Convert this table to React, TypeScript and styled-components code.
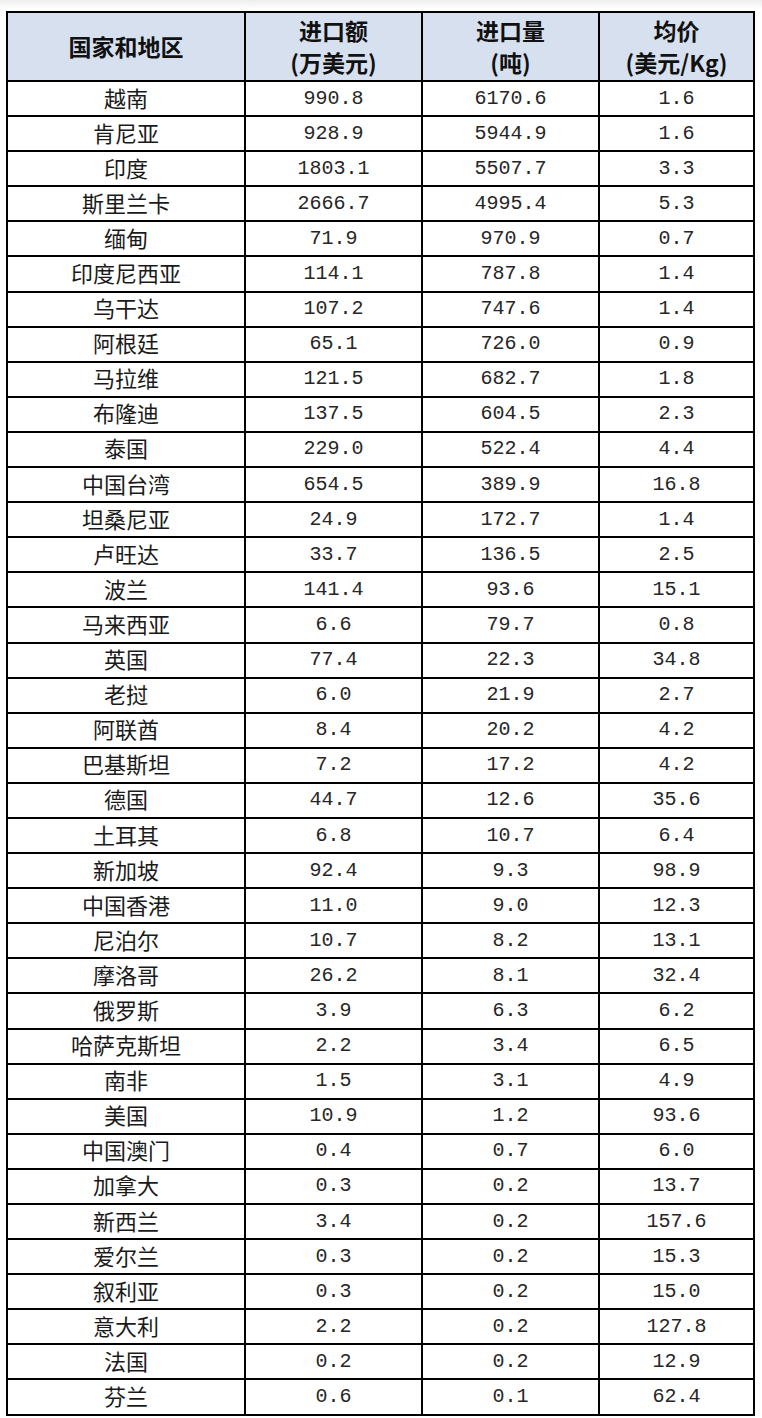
import React from "react";
import styled, { createGlobalStyle } from "styled-components";

const Global = createGlobalStyle`
  html, body { margin: 0; padding: 0; background: #ffffff; }
  body {
    width: 762px;
    background: linear-gradient(#ededed 0px, #f6f6f6 4px, #ffffff 9px) no-repeat;
    font-family: "Noto Sans CJK SC", "Noto Sans", sans-serif;
    color: #111;
  }
`;

const Page = styled.div`
  padding: 11px 0 0 6px;
  width: 756px;
  box-sizing: border-box;
`;

const Table = styled.table`
  border-collapse: collapse;
  table-layout: fixed;
  width: 747px;
`;

const HeadCell = styled.th`
  background: #d7e0ef;
  border: 2px solid #000;
  height: 65px;
  padding: 0 0 2px;
  font-weight: 700;
  font-size: 23px;
  line-height: 32px;
  color: #111;
  text-align: center;
  vertical-align: middle;
`;

const Cell = styled.td<{ $num?: boolean }>`
  border: 2px solid #000;
  height: ${(p) => (p.$num ? "33.1px" : "29.1px")};
  padding: ${(p) => (p.$num ? "0" : "0 0 4px")};
  text-align: center;
  vertical-align: middle;
  color: ${(p) => (p.$num ? "#262626" : "#1a1a1a")};
  font-size: ${(p) => (p.$num ? "20px" : "22px")};
  line-height: 1;
  font-family: ${(p) =>
    p.$num
      ? '"Liberation Mono", "Noto Sans CJK SC", monospace'
      : '"Noto Sans CJK SC", sans-serif'};
`;

const rows: [string, string, string, string][] = [
  ["越南", "990.8", "6170.6", "1.6"],
  ["肯尼亚", "928.9", "5944.9", "1.6"],
  ["印度", "1803.1", "5507.7", "3.3"],
  ["斯里兰卡", "2666.7", "4995.4", "5.3"],
  ["缅甸", "71.9", "970.9", "0.7"],
  ["印度尼西亚", "114.1", "787.8", "1.4"],
  ["乌干达", "107.2", "747.6", "1.4"],
  ["阿根廷", "65.1", "726.0", "0.9"],
  ["马拉维", "121.5", "682.7", "1.8"],
  ["布隆迪", "137.5", "604.5", "2.3"],
  ["泰国", "229.0", "522.4", "4.4"],
  ["中国台湾", "654.5", "389.9", "16.8"],
  ["坦桑尼亚", "24.9", "172.7", "1.4"],
  ["卢旺达", "33.7", "136.5", "2.5"],
  ["波兰", "141.4", "93.6", "15.1"],
  ["马来西亚", "6.6", "79.7", "0.8"],
  ["英国", "77.4", "22.3", "34.8"],
  ["老挝", "6.0", "21.9", "2.7"],
  ["阿联酋", "8.4", "20.2", "4.2"],
  ["巴基斯坦", "7.2", "17.2", "4.2"],
  ["德国", "44.7", "12.6", "35.6"],
  ["土耳其", "6.8", "10.7", "6.4"],
  ["新加坡", "92.4", "9.3", "98.9"],
  ["中国香港", "11.0", "9.0", "12.3"],
  ["尼泊尔", "10.7", "8.2", "13.1"],
  ["摩洛哥", "26.2", "8.1", "32.4"],
  ["俄罗斯", "3.9", "6.3", "6.2"],
  ["哈萨克斯坦", "2.2", "3.4", "6.5"],
  ["南非", "1.5", "3.1", "4.9"],
  ["美国", "10.9", "1.2", "93.6"],
  ["中国澳门", "0.4", "0.7", "6.0"],
  ["加拿大", "0.3", "0.2", "13.7"],
  ["新西兰", "3.4", "0.2", "157.6"],
  ["爱尔兰", "0.3", "0.2", "15.3"],
  ["叙利亚", "0.3", "0.2", "15.0"],
  ["意大利", "2.2", "0.2", "127.8"],
  ["法国", "0.2", "0.2", "12.9"],
  ["芬兰", "0.6", "0.1", "62.4"],
];

export default function App() {
  return (
    <>
      <Global />
      <Page>
        <Table>
          <colgroup>
            <col style={{ width: 238 }} />
            <col style={{ width: 177 }} />
            <col style={{ width: 177 }} />
            <col style={{ width: 155 }} />
          </colgroup>
          <thead>
            <tr>
              <HeadCell>国家和地区</HeadCell>
              <HeadCell>
                进口额
                <br />
                (万美元)
              </HeadCell>
              <HeadCell>
                进口量
                <br />
                (吨)
              </HeadCell>
              <HeadCell>
                均价
                <br />
                (美元/Kg)
              </HeadCell>
            </tr>
          </thead>
          <tbody>
            {rows.map((r) => (
              <tr key={r[0]}>
                <Cell>{r[0]}</Cell>
                <Cell $num>{r[1]}</Cell>
                <Cell $num>{r[2]}</Cell>
                <Cell $num>{r[3]}</Cell>
              </tr>
            ))}
          </tbody>
        </Table>
      </Page>
    </>
  );
}
